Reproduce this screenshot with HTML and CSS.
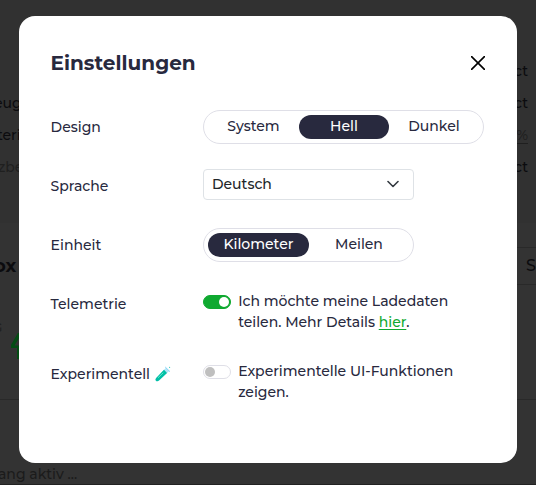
FILE: index.html
```html
<!DOCTYPE html>
<html lang="de">
<head>
<meta charset="utf-8">
<title>Einstellungen</title>
<link rel="stylesheet" href="styles.css">
</head>
<body>
<div class="page" aria-hidden="true">
  <div class="upper">
    <div class="line"><span></span><span>ct</span></div>
    <div class="line"><span class="vehicle-name">eug</span><span>ct</span></div>
    <div class="line"><span class="battery">teri</span><span class="pct">%</span></div>
    <div class="line"><span class="muted">zbe</span><span>ct</span></div>
  </div>
  <div class="loadpoint">
    <div class="head"><b>ox</b><span class="mode">S</span></div>
    <div class="power"><small>G</small><svg width="16" height="26" viewBox="0 0 16 26"><path d="M9.5 -1L2 12V15H8V26H11V12.5H5.5L12 2Z" fill="#044c14"/></svg></div>
  </div>
  <div class="vehicle">ang aktiv ...</div>
</div>
<div class="backdrop">
  <main class="modal">
    <header>
      <h1>Einstellungen</h1>
      <button class="close" aria-label="Schließen"><svg width="14" height="14" viewBox="0 0 14 14"><path d="M.6.6l12.8 12.8M13.4.6L.6 13.4" stroke="#000" stroke-width="1.6" stroke-linecap="round"/></svg></button>
    </header>
    <div class="row design">
      <span class="label">Design</span>
      <div class="pills wide"><span class="first">System</span><span class="on">Hell</span><span>Dunkel</span></div>
    </div>
    <div class="row lang">
      <span class="label">Sprache</span>
      <div class="select"><span>Deutsch</span><svg width="12" height="8" viewBox="0 0 12 8"><path d="M1 1.5l5 5 5-5" fill="none" stroke="#343a40" stroke-width="1.6" stroke-linecap="round" stroke-linejoin="round"/></svg></div>
    </div>
    <div class="row unit">
      <span class="label">Einheit</span>
      <div class="pills"><span class="on">Kilometer</span><span>Meilen</span></div>
    </div>
    <div class="row check">
      <span class="label">Telemetrie</span>
      <i class="switch checked"></i>
      <p>Ich möchte meine Ladedaten<br>teilen. Mehr Details <a href="#">hier</a>.</p>
    </div>
    <div class="row check">
      <span class="label">Experimentell<svg class="tube" width="16" height="16" viewBox="0 0 16 16"><path d="M11 1.8L14.2 5 4 14.5Q2.2 15.8 1 14.7T1.4 11.8Z" fill="#b3e5f7"/><path d="M9 3.7L12 7 4 14.5Q2.2 15.8 1 14.7T1.4 11.8Z" fill="#00bfa5"/><path d="M8 7L3.2 11.6" stroke="#5fe8ca" stroke-width="1" stroke-linecap="round"/><path d="M10.5 1.3L14.7 5.4" stroke="#81d4fa" stroke-width="1" stroke-linecap="round"/><circle cx="14.6" cy="1.3" r=".6" fill="#35cdb6"/></svg></span>
      <i class="switch"></i>
      <p>Experimentelle UI-Funktionen<br>zeigen.</p>
    </div>
  </main>
</div>
</body>
</html>
```
FILE: styles.css
```css
* { box-sizing: border-box; }
body { margin: 0; height: 485px; overflow: hidden; background: #333; color: #28293e; font: 500 14px/21px Montserrat, Inter, sans-serif; }
.page { height: 485px; color: #0b0b0e; border-bottom: 1px solid #222; }
.upper { height: 223px; padding: 55px 8px 0 0; background: #313131; }
.line { display: flex; justify-content: space-between; height: 32px; line-height: 32px; }
.vehicle-name { margin-left: -6px; }
.battery { margin-left: -3px; }
.muted { margin-left: -2px; color: #1f1f1f; }
.pct { color: #1f1f1f; text-decoration: underline; text-underline-offset: 3px; }
.loadpoint { height: 177px; border-bottom: 1px solid #292929; padding-top: 24px; }
.head { display: flex; justify-content: space-between; height: 38px; line-height: 38px; }
.head b { font-size: 18px; font-weight: 700; margin-left: -6px; }
.mode { width: 40px; padding-left: 30px; border: solid #292929; border-width: 1px 0; font-size: 16px; line-height: 35px; }
.power { display: flex; gap: 6px; padding-top: 32px; color: #1f1f1f; }
.power small { width: 10px; margin-left: -7px; font-size: 12px; }
.power svg { flex: none; margin-top: 16px; }
.vehicle { margin-left: -2px; padding-top: 64px; color: #1b1b1b; }
.backdrop { position: absolute; inset: 0; padding: 16px 19px; }
.modal { width: 498px; height: 447px; padding: 32px 32px 32px 31.6px; border-radius: 16px; background: #fff; }
header { display: flex; justify-content: space-between; align-items: center; height: 30px; }
h1 { margin: 0; font-size: 20px; line-height: 30px; font-weight: 700; }
.close { display: flex; width: 14px; height: 14px; margin: 0; padding: 0; border: 0; background: none; }
.row { display: grid; grid-template-columns: 152.4px auto; justify-content: start; }
.label { padding-top: 7px; white-space: nowrap; }
.design { margin-top: 32px; height: 59px; }
.lang { height: 59px; }
.unit { height: 63px; }
.pills { display: flex; width: 211px; height: 34px; padding: 4px; border: 1px solid #dfdfe7; border-radius: 17px; }
.pills.wide { width: 281px; }
.pills span { flex: 1; height: 24px; line-height: 23px; border-radius: 12px; text-align: center; }
.pills .on { flex: 0 0 101px; background: #28293e; color: #fff; }
.pills.wide .on { flex-basis: 90px; }
.pills .first { flex: 0 0 91px; }
.select { display: flex; justify-content: space-between; align-items: center; width: 211px; height: 31px; padding: 0 14px 1px 8px; border: 1px solid #dee2e6; border-radius: 4px; color: #212529; }
.check { grid-template-columns: 152.4px 35.2px auto; height: 70px; }
.check .label { padding-top: 3px; }
.check p { margin: 0; white-space: nowrap; }
.switch { width: 28px; height: 14px; margin-top: 4px; padding: 1px; border: 1px solid #dfdfe7; border-radius: 7px; }
.switch::before { content: ""; display: block; width: 10px; height: 10px; border-radius: 50%; background: #bfbfbf; }
.switch.checked { border-color: #0fa930; background: #0fa930; }
.switch.checked::before { margin-left: auto; background: #fff; }
a { color: #0fa930; text-decoration: underline; text-underline-offset: 2px; }
.tube { margin-left: 5px; vertical-align: -3px; }
```
